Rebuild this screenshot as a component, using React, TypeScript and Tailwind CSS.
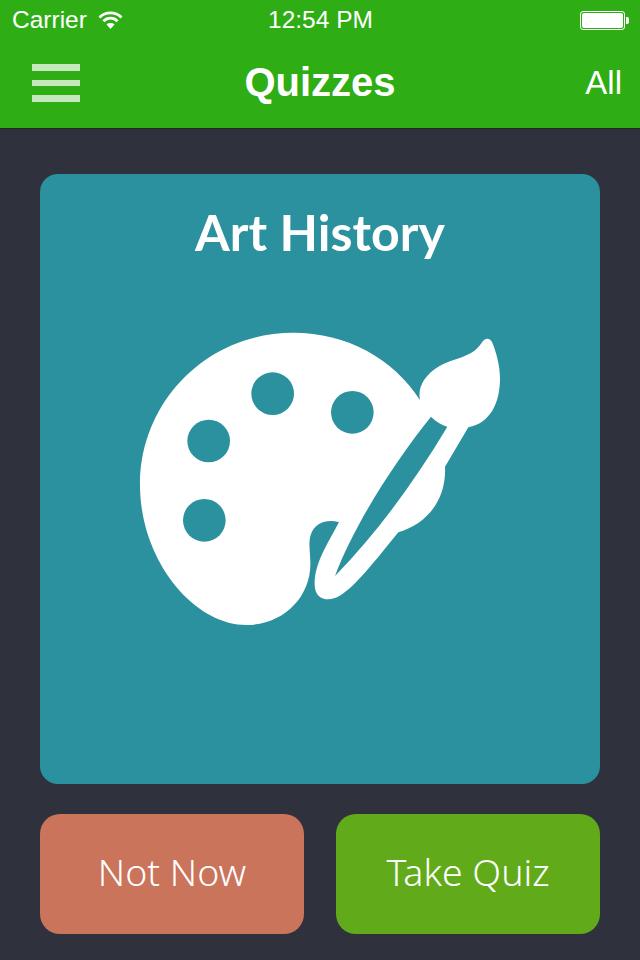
function Palette() {
  return (
    <svg width="380" height="320" viewBox="0 0 1140 960" className="shrink-0">
      <path
        fill="#fff"
        fillRule="evenodd"
        d="M870 240C790 115 650 38 490 38C235 38 30 240 30 495C30 720 190 915 350 915C460 915 545 830 541 725C540 690 535 670 542 645C555 605 595 597 627 607C590 675 552 735 554 795C555 825 572 838 595 838C640 838 690 780 805 637C890 612 950 540 945 440L1015 322C1080 310 1110 250 1110 175C1110 135 1098 95 1087 68C1080 52 1065 52 1055 68C1025 115 975 110 925 140C885 165 862 200 870 240ZM903 290C918 305 935 315 952 320C850 490 740 640 615 768C670 620 790 430 903 290Z"
      />
      <circle cx="428" cy="221" r="64" fill="#2c919e" />
      <circle cx="667" cy="277" r="64" fill="#2c919e" />
      <circle cx="236" cy="363" r="64" fill="#2c919e" />
      <circle cx="223" cy="601" r="64" fill="#2c919e" />
    </svg>
  );
}

function Wifi() {
  return (
    <svg width="25" height="18" viewBox="0 0 25 18" fill="none" stroke="#fff" strokeWidth="2.8">
      <path d="M1.5 6.4C7.6 .4 17.4 .4 23.5 6.4" />
      <path d="M5.4 10.2C9.4 6.2 15.6 6.2 19.6 10.2" />
      <path d="M12.5 18l-4-4.6c2.2-1.8 5.8-1.8 8 0z" fill="#fff" stroke="none" />
    </svg>
  );
}

export default function App() {
  return (
    <div className="w-[640px] h-[960px] bg-[#2f313d] flex flex-col font-['Liberation_Sans',sans-serif] text-white overflow-hidden">
      <div className="h-[129px] shrink-0 bg-[#2fad15] border-b border-[#1d2a1c] flex flex-col">
        <div className="h-[40px] shrink-0 grid grid-cols-3 items-center pl-[12px] pr-[11px] text-[24.5px]">
          <div className="flex items-center gap-[11px]">
            <span>Carrier</span>
            <Wifi />
          </div>
          <div className="text-center whitespace-nowrap">12:54 PM</div>
          <div className="flex justify-end items-center">
            <div className="w-[45px] h-[19px] border border-white rounded-[3px] p-[1px]">
              <div className="w-full h-full bg-white rounded-[2px]" />
            </div>
            <div className="w-[3px] h-[7px] bg-white rounded-r-[2px] ml-[1px]" />
          </div>
        </div>
        <div className="flex-1 flex items-center justify-between pl-[32px] pr-[18px] relative">
          <div className="flex flex-col gap-[9px] w-[48px] mb-[2px]">
            <div className="h-[7px] bg-[#c3e9bc]" />
            <div className="h-[6px] bg-[#c3e9bc]" />
            <div className="h-[7px] bg-[#c3e9bc]" />
          </div>
          <div className="absolute inset-x-0 text-center font-bold text-[40px] mb-[4px]">Quizzes</div>
          <div className="text-[33px] mb-[2px]">All</div>
        </div>
      </div>

      <div className="flex-1 px-[40px] pt-[45px] flex flex-col gap-[30px]">
        <div className="h-[610px] bg-[#2c919e] rounded-[18px] flex flex-col items-center pt-[30px]">
          <div className="font-['Lato',sans-serif] font-bold text-[50px] tracking-[0.1px] leading-[56px] h-[56px]">Art History</div>
          <div className="mt-[60px]">
            <Palette />
          </div>
        </div>
        <div className="grid grid-cols-2 gap-[32px] font-['Noto_Sans',sans-serif] font-light text-[37.5px]">
          <div className="h-[120px] rounded-[20px] bg-[#ca745c] flex items-center justify-center pb-[3px]">Not Now</div>
          <div className="h-[120px] rounded-[20px] bg-[#61ab1b] flex items-center justify-center pb-[3px]">Take Quiz</div>
        </div>
      </div>
    </div>
  );
}
